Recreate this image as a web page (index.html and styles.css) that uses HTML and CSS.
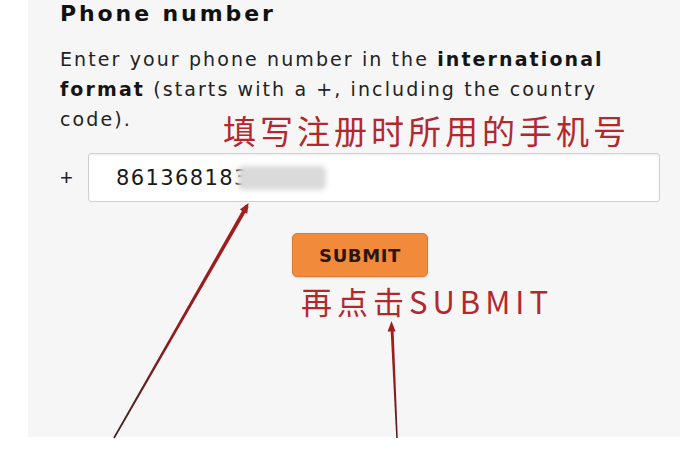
FILE: index.html
```html
<!DOCTYPE html>
<html lang="en">
<head>
<meta charset="utf-8">
<title>Phone number</title>
<link rel="stylesheet" href="styles.css">
</head>
<body>
<div class="page">
  <main class="panel">
    <h1 class="title">Phone number</h1>
    <p class="desc">Enter your phone number in the <b>international</b><br><b>format</b> (starts with a +, including the country<br>code).</p>
    <div class="phone-row">
      <span class="plus">+</span>
      <div class="field"><span class="value">861368183</span><span class="blur"></span></div>
    </div>
    <div class="actions"><button class="submit" type="button">SUBMIT</button></div>
  </main>
  <div class="note note-phone">填写注册时所用的手机号</div>
  <div class="note note-submit">再点击SUBMIT</div>
  <svg class="arrows" width="680" height="453" viewBox="0 0 680 453" aria-hidden="true">
    <defs>
      <linearGradient id="a1" x1="114" y1="438" x2="247" y2="204" gradientUnits="userSpaceOnUse">
        <stop offset="0" stop-color="#3a2424"/>
        <stop offset="0.45" stop-color="#8e1d1d"/>
        <stop offset="1" stop-color="#a51e1e"/>
      </linearGradient>
      <linearGradient id="a2" x1="397" y1="438" x2="392" y2="322" gradientUnits="userSpaceOnUse">
        <stop offset="0" stop-color="#4a2020"/>
        <stop offset="0.5" stop-color="#951c1c"/>
        <stop offset="1" stop-color="#a51e1e"/>
      </linearGradient>
    </defs>
    <polygon points="113.3,437.6 114.7,438.4 248.7,207 245.3,205" fill="url(#a1)"/>
    <polygon points="248.6,203 247.2,213.8 239.8,209.6" fill="#a51e1e"/>
    <polygon points="396.25,438 397.75,438 393.5,328 390.5,328" fill="url(#a2)"/>
    <polygon points="391.5,321 395.6,331.5 387.6,331.5" fill="#a51e1e"/>
  </svg>
</div>
</body>
</html>
```

FILE: styles.css
```css
html, body {
  margin: 0;
  padding: 0;
  background: #ffffff;
}

.page {
  position: relative;
  width: 680px;
  height: 453px;
  overflow: hidden;
}

.panel {
  box-sizing: border-box;
  margin-left: 28px;
  width: 652px;
  height: 437px;
  padding: 0 20px 0 32px;
  background: #f6f6f6;
  font-family: "DejaVu Sans", "Liberation Sans", sans-serif;
  color: #1c1c1c;
}

.title {
  margin: 0;
  padding-top: 2px;
  font-size: 22px;
  line-height: 24px;
  font-weight: bold;
  letter-spacing: 2.9px;
  color: #111111;
}

.desc {
  margin: 18px 0 0;
  font-size: 19px;
  line-height: 30px;
  letter-spacing: 2.1px;
  color: #222222;
  white-space: nowrap;
}

.desc b {
  font-weight: bold;
  color: #151515;
}

.phone-row {
  margin-top: 19px;
  display: flex;
  align-items: center;
}

.plus {
  width: 28px;
  padding-left: 0;
  box-sizing: border-box;
  font-family: "Liberation Sans", sans-serif;
  font-size: 22px;
  color: #222222;
}

.field {
  flex: 1;
  box-sizing: border-box;
  height: 49px;
  display: flex;
  align-items: center;
  padding-left: 27px;
  background: #ffffff;
  border: 1px solid #cfcfcf;
  border-radius: 3px;
  box-shadow: inset 0 1px 2px rgba(0, 0, 0, 0.08);
  font-size: 21px;
  letter-spacing: 1.4px;
  color: #1a1a1a;
}

.blur {
  display: inline-block;
  width: 88px;
  height: 24px;
  margin-left: -11px;
  background: #dadada;
  border-radius: 5px;
  filter: blur(2.5px);
}

.actions {
  margin-top: 31px;
  display: flex;
  justify-content: center;
}

.submit {
  box-sizing: border-box;
  width: 136px;
  height: 44px;
  padding: 0;
  background: #f28a3b;
  border: 1px solid #dc7a34;
  border-radius: 5px;
  box-shadow: 0 1px 2px rgba(0, 0, 0, 0.15);
  font-family: "DejaVu Sans", "Liberation Sans", sans-serif;
  font-size: 18px;
  font-weight: bold;
  letter-spacing: 0.6px;
  color: #2b1710;
}

.note {
  position: absolute;
  margin: 0;
  line-height: 1;
  white-space: nowrap;
  color: #b3282d;
  font-family: "Noto Sans CJK SC", "Noto Sans", sans-serif;
}

.note-phone {
  left: 223px;
  top: 114px;
  font-size: 33px;
  letter-spacing: 4px;
}

.note-submit {
  left: 301px;
  top: 285px;
  font-size: 31px;
  letter-spacing: 5px;
}

.arrows {
  position: absolute;
  left: 0;
  top: 0;
  pointer-events: none;
}
```
